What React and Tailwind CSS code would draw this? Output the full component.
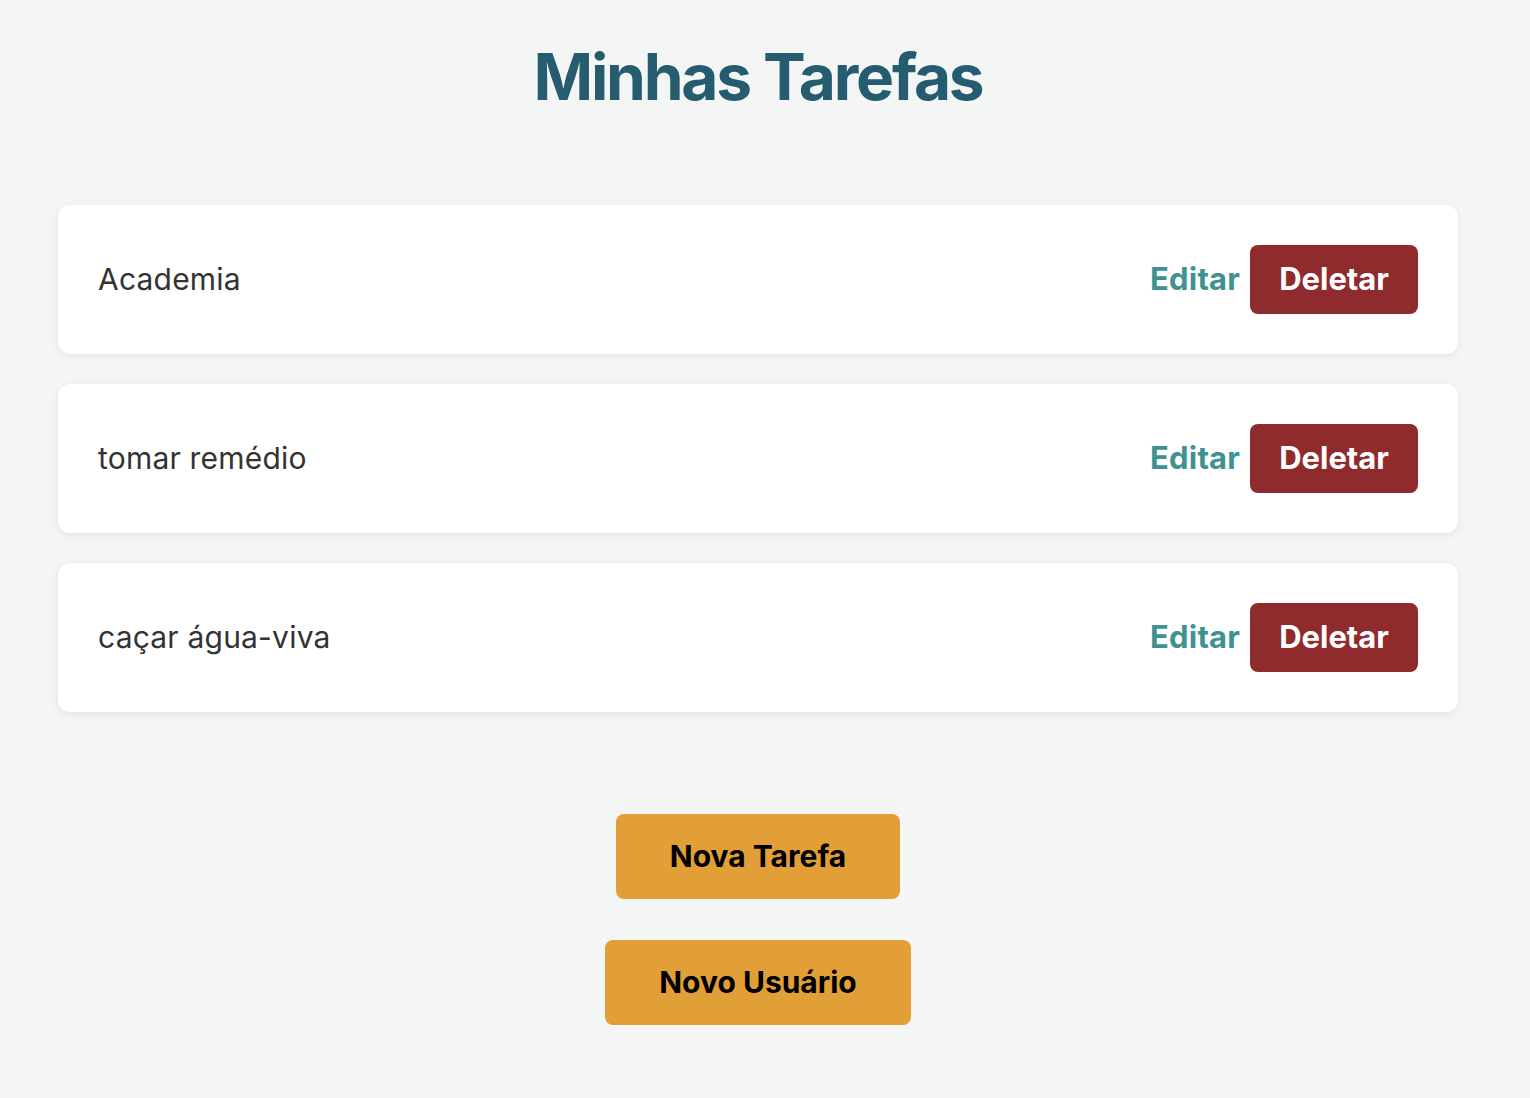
export default function App() {
  const tasks = ['Academia', 'tomar remédio', 'caçar água-viva'];

  return (
    <main className="min-h-screen bg-[#f4f6f6] px-[58px] pb-[72px] font-['Inter',sans-serif]">
      <div className="w-[1400px]">
        <h1 className="pt-[33px] text-center text-[64px] font-bold leading-[88px] tracking-[-2.2px] text-[#265c6f]">Minhas Tarefas</h1>

        <ul className="mt-[84px] flex flex-col gap-[30px]">
          {tasks.map(task => (
            <li key={task} className="flex items-center justify-between rounded-[12px] bg-white p-[40px] shadow-[0_2px_8px_rgba(0,0,0,0.08)]">
              <span className="text-[30px] tracking-[0.2px] text-[#333333]">{task}</span>
              <div className="flex items-center gap-[10px]">
                <button className="text-[31px] font-bold tracking-[0.2px] text-[#3f9292]">Editar</button>
                <button className="h-[69px] rounded-[8px] bg-[#8f2b2d] px-[29px] text-[31px] font-bold text-white">Deletar</button>
              </div>
            </li>
          ))}
        </ul>

        <div className="mt-[102px] flex flex-col items-center gap-[41px]">
          <button className="h-[85px] rounded-[8px] bg-[#e29e37] px-[54px] text-[30px] font-bold text-black">Nova Tarefa</button>
          <button className="h-[85px] rounded-[8px] bg-[#e29e37] px-[54px] text-[30px] font-bold text-black">Novo Usuário</button>
        </div>
      </div>
    </main>
  );
}
